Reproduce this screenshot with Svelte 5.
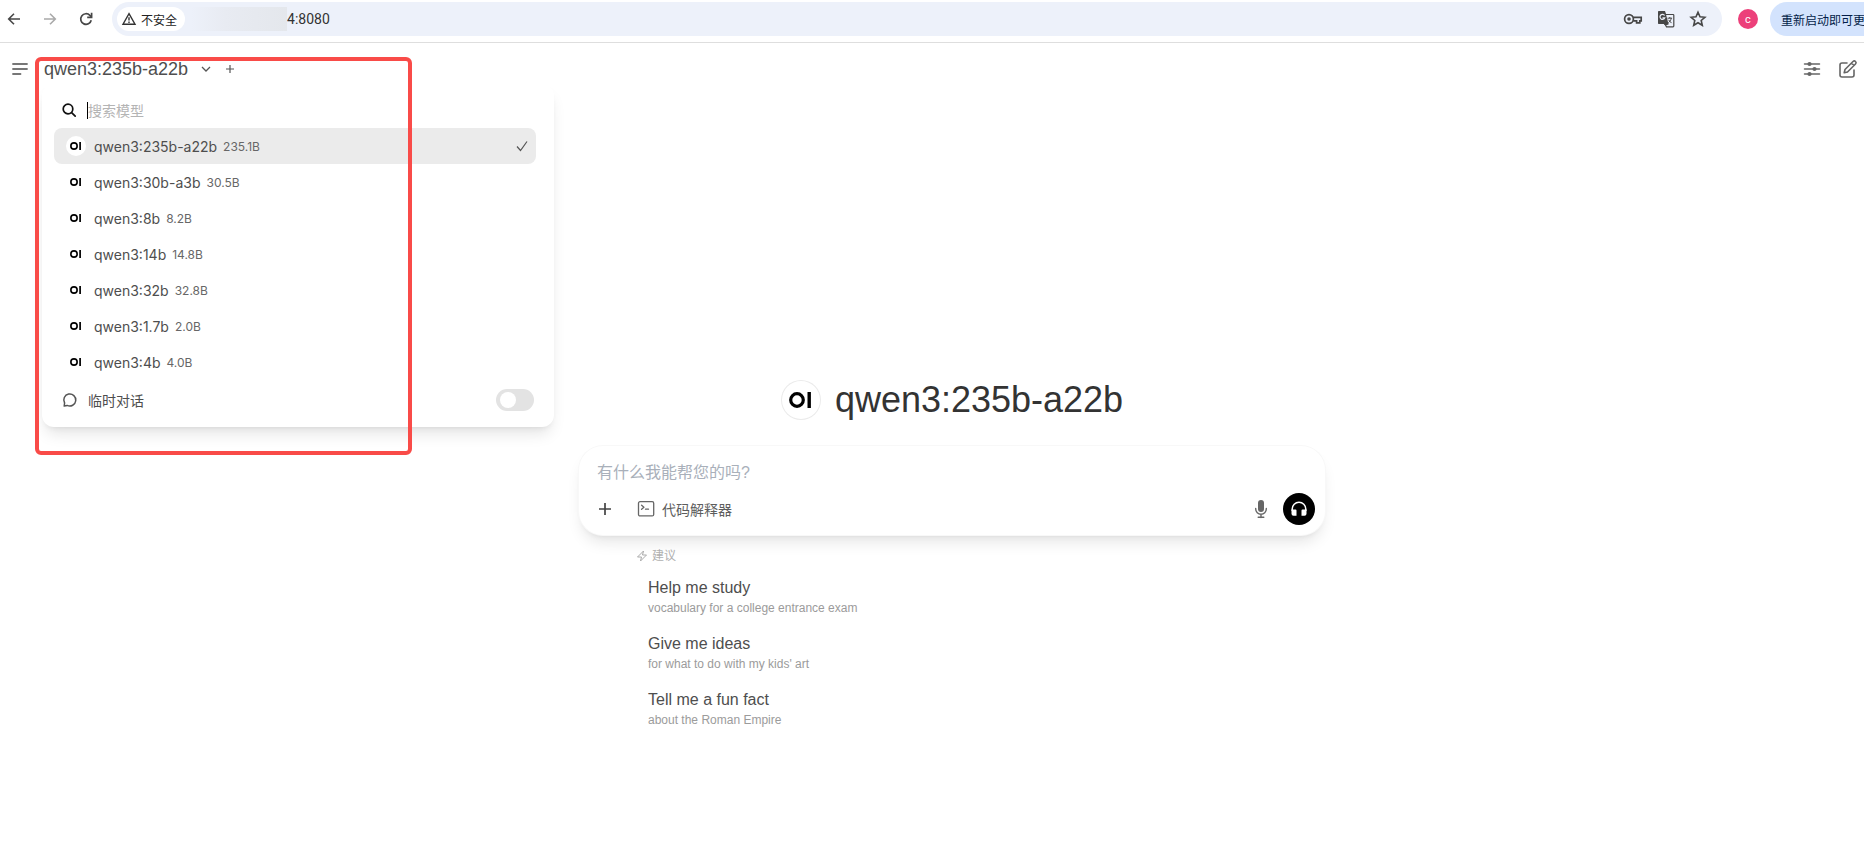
<script>
  const models = [
    { name: 'qwen3:235b-a22b', size: '235.1B' },
    { name: 'qwen3:30b-a3b', size: '30.5B' },
    { name: 'qwen3:8b', size: '8.2B' },
    { name: 'qwen3:14b', size: '14.8B' },
    { name: 'qwen3:32b', size: '32.8B' },
    { name: 'qwen3:1.7b', size: '2.0B' },
    { name: 'qwen3:4b', size: '4.0B' }
  ];
  const suggestions = [
    { title: 'Help me study', sub: 'vocabulary for a college entrance exam' },
    { title: 'Give me ideas', sub: "for what to do with my kids' art" },
    { title: 'Tell me a fun fact', sub: 'about the Roman Empire' }
  ];
  let selected = $state('qwen3:235b-a22b');
  let address = $state('4:8080');
  let query = $state('');
  let prompt = $state('');
  let temporary = $state(false);
</script>

{#snippet logo(size)}
  <svg width={size} height={size} viewBox="0 0 40 40" aria-hidden="true">
    <circle cx="16" cy="20" r="6.3" fill="none" stroke="#000" stroke-width="3.2" />
    <rect x="26.5" y="12" width="3.4" height="16" fill="#000" />
  </svg>
{/snippet}

<div class="page">
  <div class="browser">
    <nav class="nav">
      <button aria-label="Back">
        <svg width="16" height="16" viewBox="0 0 16 16" fill="none" stroke="#474747" stroke-width="1.6"><path d="M14 8H3M8 2.7 2.7 8 8 13.3" /></svg>
      </button>
      <button aria-label="Forward">
        <svg width="16" height="16" viewBox="0 0 16 16" fill="none" stroke="#a9a9a9" stroke-width="1.6"><path d="M2 8h11M8 2.7 13.3 8 8 13.3" /></svg>
      </button>
      <button aria-label="Reload">
        <svg width="16" height="16" viewBox="0 0 16 16" fill="none" stroke="#474747" stroke-width="1.7"><path d="M13.2 9.2A5.3 5.3 0 1 1 11.9 4.4L13.5 6" /><path d="M13.6 1.8v4.5H9.2" /></svg>
      </button>
    </nav>
    <div class="address">
      <button class="chip">
        <svg width="16" height="16" viewBox="0 0 16 16" fill="none" stroke="#333" stroke-width="1.4"><path d="M8 2.6 14 13.2H2Z" /><path d="M8 6.2v3.4M8 10.6v1.4" /></svg>
        不安全
      </button>
      <span class="masked"></span>
      <input aria-label="Address" bind:value={address} />
      <button aria-label="Passwords">
        <svg width="20" height="16" viewBox="0 0 20 16" fill="none" stroke="#474747" stroke-width="1.7"><circle cx="6" cy="8" r="4.4" /><circle cx="6" cy="8" r="1.8" fill="#474747" stroke="none" /><path d="M10.2 6.4h8v3.4h-1.4v2h-3.2v-2h-3.4" /></svg>
      </button>
      <button aria-label="Translate">
        <svg width="18" height="18" viewBox="0 0 18 18"><path d="M2 1h6l1.200 3.500H9L11.500 14 10 15H7.500L7 14H2c-.7 0-1-.4-1-1V2c0-.6.3-1 1-1Z" fill="#474747" /><path d="M9 4.500h7c.5 0 .8.300.8.800V16c0 .5-.3.800-.8.800H9.500L8 14h3.500" fill="none" stroke="#474747" stroke-width="1.200" /><path d="M7.600 5.500A2.500 2.500 0 1 0 7.800 7.800H5.500" fill="none" stroke="#edf1fa" stroke-width="1.200" /><path d="M10.500 8.200h4.600M12.800 7v1.200M14.300 8.300c-.5 2-1.700 3.500-3 4.500M11.500 9.800l3 3.300" fill="none" stroke="#474747" stroke-width="1" /></svg>
      </button>
      <button aria-label="Bookmark">
        <svg width="18" height="18" viewBox="0 0 18 18" fill="none" stroke="#474747" stroke-width="1.6"><path d="m9 2.300 2 4.500 4.900.5-3.700 3.200 1.100 4.800L9 12.800l-4.300 2.500 1.100-4.800-3.700-3.200 4.900-.5Z" /></svg>
      </button>
    </div>
    <button class="profile">c</button>
    <button class="update">重新启动即可更</button>
  </div>

  <header class="top">
    <button aria-label="Sidebar">
      <svg width="18" height="16" viewBox="0 0 18 16" fill="none" stroke="#777" stroke-width="1.8" stroke-linecap="round"><path d="M2 3h14M2 8h14M2 13h7.500" /></svg>
    </button>
    <div class="picker">
      <button class="current">
        {selected}
        <svg width="12" height="12" viewBox="0 0 12 12" fill="none" stroke="#555" stroke-width="1.300"><path d="m2 4 4 4 4-4" /></svg>
      </button>
      <button class="add" aria-label="Add model">
        <svg width="12" height="12" viewBox="0 0 12 12" fill="none" stroke="#555" stroke-width="1.200"><path d="M6 2v8M2 6h8" /></svg>
      </button>

      <div class="menu">
        <label class="search">
          <svg width="16" height="16" viewBox="0 0 16 16" fill="none" stroke="#111" stroke-width="1.700" stroke-linecap="round"><circle cx="7" cy="7" r="4.800" /><path d="m10.600 10.600 3.600 3.600" /></svg>
          <input placeholder="搜索模型" aria-label="搜索模型" bind:value={query} />
        </label>
        <div class="models">
          {#each models as m}
            <button class="model" class:active={m.name === selected} onclick={() => (selected = m.name)}>
              <span class="dot">{@render logo(20)}</span>
              <span class="name">{m.name}</span>
              <span class="size">{m.size}</span>
              {#if m.name === selected}
                <svg class="check" width="16" height="16" viewBox="0 0 16 16" fill="none" stroke="#555" stroke-width="1.200"><path d="m3 8.500 3.500 4L13 3.500" /></svg>
              {/if}
            </button>
          {/each}
        </div>
        <label class="temp">
          <svg width="16" height="16" viewBox="0 0 16 16" fill="none" stroke="#555" stroke-width="1.500" stroke-linejoin="round"><path d="M2.600 11A6 6 0 1 1 5.200 13.400L2.200 14Z" /></svg>
          <span>临时对话</span>
          <input type="checkbox" bind:checked={temporary} />
        </label>
      </div>
      <div class="highlight"></div>
    </div>
    <div class="tools">
      <button aria-label="Controls">
        <svg width="20" height="20" viewBox="0 0 20 20" fill="none" stroke="#666" stroke-width="1.500" stroke-linecap="round"><path d="M2.500 5h15M2.500 10h15M2.500 15h15" /><g fill="#666" stroke="none"><circle cx="7.500" cy="5" r="2.100" /><circle cx="12.500" cy="10" r="2.100" /><circle cx="7.500" cy="15" r="2.100" /></g></svg>
      </button>
      <button aria-label="New chat">
        <svg width="20" height="20" viewBox="0 0 20 20" fill="none" stroke="#666" stroke-width="1.600" stroke-linecap="round" stroke-linejoin="round"><path d="M9 4H4a2 2 0 0 0-2 2v10a2 2 0 0 0 2 2h10a2 2 0 0 0 2-2v-5" /><path d="m7 10.500 8-8a1.700 1.700 0 0 1 2.500 2.500l-8 8-3.300.8Z M13.500 4 16 6.500" /></svg>
      </button>
    </div>
  </header>

  <main>
    <h1><span class="avatar">{@render logo(40)}</span>{selected}</h1>
    <form class="composer" onsubmit={(e) => e.preventDefault()}>
      <input placeholder="有什么我能帮您的吗?" aria-label="有什么我能帮您的吗?" bind:value={prompt} />
      <div class="actions">
        <button type="button" aria-label="More">
          <svg width="16" height="16" viewBox="0 0 16 16" fill="none" stroke="#444" stroke-width="1.700"><path d="M8 2v12M2 8h12" /></svg>
        </button>
        <button type="button" class="code">
          <svg width="18" height="18" viewBox="0 0 18 18" fill="none" stroke="#666" stroke-width="1.300" stroke-linecap="round" stroke-linejoin="round"><rect x="1.500" y="1.700" width="15.200" height="14.200" rx="1.500" /><path d="m4.600 5.200 2.300 2-2.300 2M8.500 9.200h3" /></svg>
          代码解释器
        </button>
        <button type="button" class="mic" aria-label="Dictate">
          <svg width="20" height="20" viewBox="0 0 20 20" fill="#666"><rect x="7" y="1" width="6" height="12" rx="3" /><path d="M4.700 9.500v.5a5.300 5.300 0 0 0 10.600 0v-.5M10 15.500v3M7.200 18.300h5.600" fill="none" stroke="#666" stroke-width="1.400" stroke-linecap="round" /></svg>
        </button>
        <button type="button" class="voice" aria-label="Voice call">
          <svg width="20" height="20" viewBox="0 0 20 20" fill="#fff"><path d="M3.200 12V10a6.800 6.800 0 0 1 13.600 0v2" fill="none" stroke="#fff" stroke-width="1.500" /><path d="M2.500 10.500H6.500a1 1 0 0 1 1 1v5.300H4.500a2 2 0 0 1-2-2ZM17.500 10.500H13.500a1 1 0 0 0-1 1v5.300h3a2 2 0 0 0 2-2Z" /></svg>
        </button>
      </div>
    </form>
    <section class="suggestions">
      <h2>
        <svg width="12" height="12" viewBox="0 0 12 12" fill="none" stroke="#aaa" stroke-linejoin="round"><path d="M7.500 1 1.500 7h4L4.500 11l6-6h-4Z" /></svg>
        建议
      </h2>
      {#each suggestions as s}
        <button class="idea" onclick={() => (prompt = s.title + ' ' + s.sub)}>
          <span class="title">{s.title}</span>
          <span class="sub">{s.sub}</span>
        </button>
      {/each}
    </section>
  </main>
</div>

<style>
  :global(body) {
    background: #fff;
    overflow-x: hidden;
  }
  * {
    box-sizing: border-box;
  }
  .page {
    font-family: 'Liberation Sans', 'Noto Sans CJK SC', sans-serif;
    color: #4e4e4e;
    overflow: hidden;
    min-height: 100vh;
  }
  button,
  input {
    font: inherit;
    color: inherit;
    background: none;
    border: 0;
    padding: 0;
    margin: 0;
    outline: 0;
    min-width: 0;
  }
  button {
    display: flex;
    align-items: center;
    white-space: nowrap;
    flex: none;
    cursor: pointer;
  }
  svg {
    display: block;
    flex: none;
  }

  .browser {
    display: flex;
    align-items: center;
    height: 43px;
    padding: 2px 0 6px 6px;
    border-bottom: 1px solid #dedede;
    font-family: Roboto, 'Noto Sans CJK SC', sans-serif;
  }
  .nav {
    display: flex;
    gap: 20px;
    margin-right: 18px;
  }
  .address {
    flex: 1;
    display: flex;
    align-items: center;
    gap: 14px;
    height: 34px;
    padding: 0 15px 0 5px;
    border-radius: 17px;
    background: #edf1fa;
  }
  .address input {
    flex: 1;
    font-size: 14px;
    color: #333;
    margin-left: -14px;
  }
  .chip {
    gap: 4px;
    height: 24px;
    padding: 0 8px 0 4px;
    border-radius: 12px;
    background: #fff;
    font-size: 12px;
    color: #222;
    margin-right: -8px;
  }
  .masked {
    width: 96px;
    height: 24px;
    background: linear-gradient(90deg, #edf1fa, #e8ebf2 35%, #e4e7ec);
  }
  .profile {
    width: 20px;
    height: 20px;
    margin: 0 12px 0 16px;
    justify-content: center;
    border-radius: 50%;
    background: #ec407a;
    color: #fff;
    font-size: 11px;
  }
  .update {
    width: 94px;
    height: 34px;
    padding-left: 11px;
    border-radius: 17px 0 0 17px;
    background: #d3e3fd;
    color: #041e49;
    font-size: 12px;
  }

  .top {
    display: flex;
    align-items: center;
    height: 52px;
    padding: 0 6px 0 11px;
  }
  .picker {
    position: relative;
    display: flex;
    align-items: center;
    gap: 12px;
    margin-left: 15px;
  }
  .current {
    gap: 12px;
    font-size: 18px;
    line-height: 24px;
  }
  .tools {
    display: flex;
    gap: 16px;
    margin-left: auto;
  }

  .menu {
    position: absolute;
    z-index: 1;
    left: -2px;
    top: 27px;
    width: 512px;
    padding: 8px 18px 8px 12px;
    border-radius: 12px;
    background: #fff;
    box-shadow: 0 10px 15px -3px rgb(0 0 0 / 0.1), 0 4px 6px -4px rgb(0 0 0 / 0.1);
    font-family: Inter, 'Noto Sans CJK SC', sans-serif;
    font-size: 14px;
  }
  .search,
  .temp {
    display: flex;
    align-items: center;
    gap: 10px;
    height: 36px;
    padding: 0 2px 0 8px;
  }
  .search {
    padding-left: 7px;
  }
  .search input {
    flex: 1;
    height: 17px;
    border-left: 1px solid #000;
  }
  .search input::placeholder {
    color: #b4b4b4;
  }
  .model {
    width: 100%;
    height: 36px;
    padding: 0 6px 0 12px;
    border-radius: 8px;
  }
  .active {
    background: #ebebeb;
  }
  .dot {
    border-radius: 50%;
    background: #fff;
  }
  .name {
    margin: 0 6px 0 8px;
  }
  .size {
    font-size: 12px;
    color: #676767;
  }
  .check {
    margin-left: auto;
  }
  .temp {
    height: 38px;
    margin-top: 1px;
  }
  .temp input {
    appearance: none;
    width: 38px;
    height: 22px;
    padding: 3px;
    margin-left: auto;
    border-radius: 11px;
    background: #e3e3e3;
  }
  .temp input::before {
    content: '';
    display: block;
    width: 16px;
    height: 16px;
    margin-left: 1px;
    border-radius: 50%;
    background: #fff;
  }
  .temp input:checked::before {
    margin-left: 16px;
  }
  .highlight {
    position: absolute;
    z-index: 2;
    left: -9px;
    top: 0;
    width: 377px;
    height: 398px;
    border: 4px solid #f94b48;
    border-radius: 6px;
    pointer-events: none;
  }

  main {
    display: flex;
    flex-direction: column;
    align-items: center;
    padding: 285px 0 40px 40px;
  }
  h1 {
    display: flex;
    align-items: center;
    gap: 14px;
    margin: 0 0 26px;
    font-size: 36px;
    line-height: 40px;
    font-weight: 400;
    color: #333;
  }
  .avatar {
    border-radius: 50%;
    box-shadow: inset 0 0 0 1px #ebebeb;
  }
  .composer {
    width: 100%;
    max-width: 746px;
    padding: 15px 10px 10px 18px;
    border-radius: 24px;
    background: #fff;
    box-shadow: 0 0 0 1px #f8f8f8, 0 10px 15px -3px rgb(0 0 0 / 0.1), 0 4px 6px -4px rgb(0 0 0 / 0.1);
  }
  .composer input {
    display: block;
    width: 100%;
    height: 24px;
    font-size: 16px;
  }
  .composer input::placeholder {
    color: #a9b0ba;
  }
  .actions {
    display: flex;
    align-items: center;
    height: 32px;
    margin-top: 8px;
  }
  .code {
    gap: 7px;
    margin-left: 24px;
    font-size: 14px;
    color: #5d5d5d;
  }
  .mic {
    margin: 0 12px 0 auto;
  }
  .voice {
    width: 32px;
    height: 32px;
    justify-content: center;
    border-radius: 50%;
    background: #000;
  }
  .suggestions {
    width: 100%;
    max-width: 632px;
    margin-top: 11px;
  }
  h2 {
    display: flex;
    align-items: center;
    gap: 4px;
    margin: 0 0 10px;
    font-size: 12px;
    line-height: 20px;
    font-weight: 400;
    color: #b0b0b0;
  }
  .idea {
    width: 100%;
    height: 56px;
    padding-left: 12px;
    flex-direction: column;
    align-items: flex-start;
  }
  .title {
    font-size: 16px;
    line-height: 24px;
  }
  .sub {
    font-size: 12px;
    line-height: 16px;
    color: #9b9b9b;
  }
</style>
